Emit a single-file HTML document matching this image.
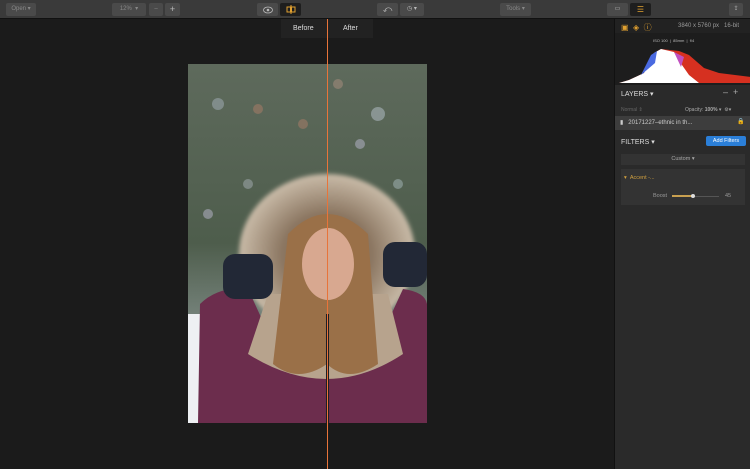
<!DOCTYPE html>
<html><head><style>
*{margin:0;padding:0;box-sizing:border-box}
body{width:750px;height:469px;background:#1b1b1b;font-family:"Liberation Sans",sans-serif;position:relative;overflow:hidden;color:#ccc}
.tb{position:absolute;left:0;top:0;width:750px;height:19px;background:#3a3a3a;border-bottom:1px solid #111}
.b{position:absolute;top:3px;height:13px;background:#4a4a4a;border-radius:2px;font-size:6px;color:#888;line-height:13px;text-align:center}
.panel{position:absolute;left:614px;top:19px;width:136px;height:450px;background:#2a2a2a;border-left:1px solid #111}
.t{position:absolute;white-space:nowrap}
</style></head><body>
<div class="tb">
 <div class="b" style="left:6px;width:30px">Open ▾</div>
 <div class="b" style="left:112px;width:34px">12% &nbsp;▾</div>
 <div class="b" style="left:149px;width:14px">–</div>
 <div class="b" style="left:165px;width:15px;color:#bbb;font-size:9px">+</div>
 <div class="b" style="left:257px;width:21px"><svg width="10" height="8" viewBox="0 0 10 8" style="margin-top:3px"><ellipse cx="5" cy="4" rx="4.5" ry="3" fill="none" stroke="#bbb" stroke-width="0.8"/><circle cx="5" cy="4" r="1.3" fill="#bbb"/></svg></div>
 <div class="b" style="left:280px;width:21px;background:#1e1e1e"><svg width="10" height="9" viewBox="0 0 10 9" style="margin-top:2px"><rect x="1" y="2" width="3.5" height="5" fill="none" stroke="#e0a030"/><rect x="5.5" y="2" width="3.5" height="5" fill="none" stroke="#e0a030"/><line x1="5" y1="0" x2="5" y2="9" stroke="#e0a030"/></svg></div>
 <div class="b" style="left:377px;width:21px;font-size:9px;color:#bbb">⤺</div>
 <div class="b" style="left:400px;width:24px;color:#bbb">◷ ▾</div>
 <div class="b" style="left:500px;width:31px">Tools ▾</div>
 <div class="b" style="left:607px;width:21px;color:#bbb">▭</div>
 <div class="b" style="left:630px;width:21px;background:#1e1e1e;color:#e0a030;font-size:8px">☰</div>
 <div class="b" style="left:729px;width:14px;color:#bbb">⇪</div>
</div>
<div style="position:absolute;left:281px;top:19px;width:92px;height:19px;background:#222"></div>
<div class="t" style="left:293px;top:25px;font-size:7px;color:#ddd">Before</div>
<div class="t" style="left:343px;top:25px;font-size:7px;color:#ddd">After</div>

<svg style="position:absolute;left:188px;top:64px" width="239" height="359" viewBox="0 0 239 359">
 <defs>
  <linearGradient id="bg" x1="0" y1="0" x2="0" y2="1"><stop offset="0" stop-color="#5e6a5c"/><stop offset=".5" stop-color="#4e5d4c"/><stop offset=".75" stop-color="#7d8a84"/><stop offset="1" stop-color="#e8ecf0"/></linearGradient>
  <radialGradient id="fur"><stop offset=".5" stop-color="#8a7560"/><stop offset="1" stop-color="#c9bba8"/></radialGradient>
  <filter id="bl"><feGaussianBlur stdDeviation="2"/></filter>
 </defs>
 <rect width="239" height="359" fill="url(#bg)"/>
 <g opacity=".6">
 <circle cx="30" cy="40" r="6" fill="#9aa6ac"/><circle cx="190" cy="50" r="7" fill="#a9b4ba"/><circle cx="60" cy="120" r="5" fill="#99a3a5"/><circle cx="150" cy="20" r="5" fill="#a08a7a"/><circle cx="210" cy="120" r="5" fill="#9aa"/><circle cx="70" cy="45" r="5" fill="#a07a66"/><circle cx="115" cy="60" r="5" fill="#a07a66"/><circle cx="172" cy="80" r="5" fill="#aab"/><circle cx="20" cy="150" r="5" fill="#aab"/></g>
 <rect x="0" y="250" width="60" height="109" fill="#eef0f3"/>
 <rect x="200" y="300" width="39" height="59" fill="#e8e9ee"/>
 <ellipse cx="139" cy="190" rx="88" ry="80" fill="url(#fur)" filter="url(#bl)"/>
 <path d="M10 359 L12 240 Q30 222 60 225 L90 290 L185 290 L215 225 Q237 228 239 240 L239 359 Z" fill="#6c2d4d"/>
 <path d="M60 290 Q139 340 215 290 L200 230 L80 230 Z" fill="#b7a38d"/>
 <path d="M100 170 Q139 130 180 170 L190 300 Q160 320 139 300 Q110 320 85 300 Z" fill="#9a7048"/>
 <ellipse cx="140" cy="200" rx="26" ry="36" fill="#d8a890"/>
 <rect x="35" y="190" width="50" height="45" rx="12" fill="#222836"/>
 <rect x="195" y="178" width="44" height="45" rx="12" fill="#222836"/>
 <rect x="138" y="250" width="3" height="109" fill="#1e1e24"/>
</svg>
<div style="position:absolute;left:327px;top:19px;width:1px;height:450px;background:#e8743a"></div>

<div class="panel">
 <div style="position:absolute;left:0;top:0;width:136px;height:14px;background:#222"></div>
 <div class="t" style="left:6px;top:3px;font-size:8px;color:#e0a030">▣ &nbsp;◈ &nbsp;ⓘ</div>
 <div class="t" style="left:63px;top:4px;font-size:6px;color:#999">3840 x 5760 px &nbsp; 16-bit</div>
 <div style="position:absolute;left:0;top:14px;width:136px;height:52px;background:#1d1d1d"></div>
 <div class="t" style="left:38px;top:19px;font-size:4px;color:#bbb">ISO 100 &nbsp;| &nbsp;85mm &nbsp;| &nbsp;f/4</div>
 <svg style="position:absolute;left:4px;top:24px" width="132" height="40" viewBox="0 0 132 40">
  <path d="M0 40 L10 37 L25 30 L35 10 L42 6 L60 8 L70 12 L85 25 L100 30 L132 34 L132 40Z" fill="#d63020"/>
  <path d="M0 40 L10 37 L25 30 L35 10 L42 6 L55 9 L63 22 L70 32 L80 40Z" fill="#fff"/>
  <path d="M22 32 L32 12 L38 8 L36 20 Z" fill="#4a6ae0"/>
  <path d="M55 9 L65 14 L62 24 Z" fill="#c050c0"/>
 </svg>
 <div class="t" style="left:6px;top:71px;font-size:7px;color:#ddd">LAYERS ▾</div>
 <div class="t" style="left:108px;top:68px;font-size:9px;color:#aaa">– &nbsp;+</div>
 <div class="t" style="left:6px;top:88px;font-size:5px;color:#666">Normal ⇕</div>
 <div class="t" style="left:70px;top:88px;font-size:5px;color:#aaa">Opacity: <b>100%</b> ▾ &nbsp;⚙▾</div>
 <div style="position:absolute;left:0;top:97px;width:136px;height:14px;background:#3d3d3d"></div>
 <div class="t" style="left:5px;top:100px;font-size:6px;color:#ccc">▮ &nbsp;&nbsp;20171227–ethnic in th...</div>
 <div class="t" style="left:122px;top:99px;font-size:6px;color:#999">🔒</div>
 <div class="t" style="left:6px;top:119px;font-size:7px;color:#ddd">FILTERS ▾</div>
 <div style="position:absolute;left:91px;top:117px;width:40px;height:10px;background:#2b7fd8;border-radius:2px;font-size:5.5px;color:#fff;text-align:center;line-height:10px">Add Filters</div>
 <div style="position:absolute;left:6px;top:135px;width:124px;height:11px;background:#333;font-size:5.5px;color:#aaa;text-align:center;line-height:11px">Custom ▾</div>
 <div style="position:absolute;left:6px;top:150px;width:124px;height:36px;background:#333"></div>
 <div class="t" style="left:9px;top:156px;font-size:5.5px;color:#d0a040">▾ &nbsp;Accent -...</div>
 <div class="t" style="left:38px;top:174px;font-size:5.5px;color:#999">Boost</div>
 <div style="position:absolute;left:57px;top:177px;width:47px;height:1px;background:#555"></div>
 <div style="position:absolute;left:57px;top:176px;width:21px;height:2px;background:#c8a050"></div>
 <div style="position:absolute;left:76px;top:175px;width:4px;height:4px;border-radius:50%;background:#ddd"></div>
 <div class="t" style="left:110px;top:174px;font-size:5.5px;color:#999">45</div>
</div>
</body></html>
